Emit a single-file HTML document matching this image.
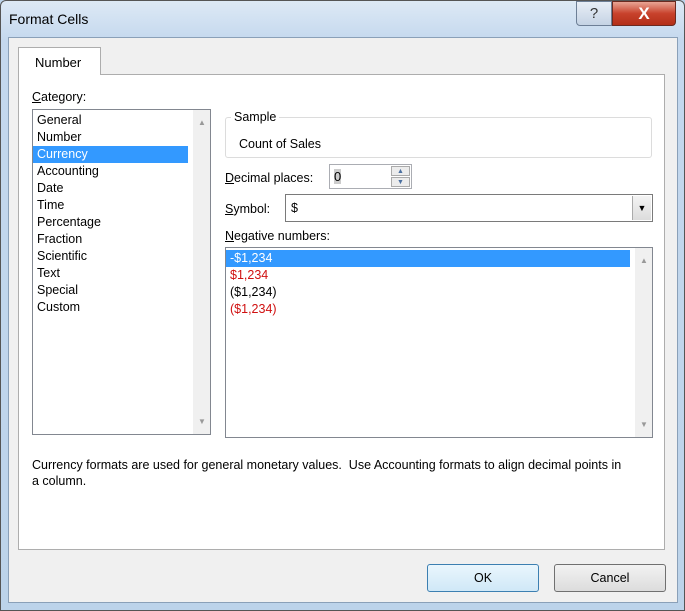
<!DOCTYPE html>
<html><head><style>
*{margin:0;padding:0;box-sizing:border-box}
body{width:685px;height:611px;overflow:hidden;font-family:"Liberation Sans",sans-serif;font-size:12px;color:#000;position:relative;background:#bcd3ea}
.a{position:absolute}
.frame{left:0;top:0;width:685px;height:611px;background:linear-gradient(#dde9f5,#c4d8ee 40px,#bcd3ea);border:1px solid #555;border-radius:6px 6px 0 0}
.client{left:8px;top:37px;width:670px;height:566px;background:#f0f0f0;border:1px solid #8aa0b8}
.panel{left:18px;top:74px;width:647px;height:476px;background:#fff;border:1px solid #adadad}
.tab{left:18px;top:47px;width:83px;height:28px;background:#fff;border:1px solid #adadad;border-bottom:none;padding:7px 0 0 16px;font-size:13px}
.list{background:#fff;border:1px solid #828790}
.it{height:17px;line-height:17px;padding-left:4px;font-size:12.5px}
.sb{position:absolute;right:0;top:0;bottom:0;width:17px;background:#f0f0f0}
.btn{border:1px solid #707070;border-radius:3px;background:linear-gradient(#f2f2f2,#dcdcdc);text-align:center;line-height:26px;font-size:12.5px}
u{text-decoration:underline}
.red{color:#d01010}
</style></head><body>
<div class="a frame"></div>
<div class="a" style="left:9px;top:11px;font-size:14px">Format Cells</div>
<div class="a" style="left:576px;top:1px;width:36px;height:25px;border:1px solid #6d7f96;border-radius:0 0 0 4px;background:linear-gradient(#e8eef6,#c5d3e4);text-align:center;font-size:15px;line-height:23px;color:#333">?</div>
<div class="a" style="left:612px;top:1px;width:64px;height:25px;border:1px solid #6b2a20;border-radius:0 0 4px 0;background:linear-gradient(#e8a595,#c8422c 50%,#b32f18);text-align:center;color:#fff;font-size:17px;font-weight:bold;line-height:23px">X</div>
<div class="a client"></div>
<div class="a panel"></div>
<div class="a tab">Number</div>
<div class="a" style="left:32px;top:90px;font-size:12.5px"><u>C</u>ategory:</div>
<div class="a list" style="left:32px;top:109px;width:179px;height:326px">
<div style="padding-top:2px">
<div class="it">General</div><div class="it">Number</div><div class="it" style="background:#3399ff;color:#fff;margin-right:22px">Currency</div><div class="it">Accounting</div><div class="it">Date</div><div class="it">Time</div><div class="it">Percentage</div><div class="it">Fraction</div><div class="it">Scientific</div><div class="it">Text</div><div class="it">Special</div><div class="it">Custom</div></div>
<div class="sb"><div class="a" style="left:5px;top:8px;color:#999;font-size:8px">▲</div><div class="a" style="left:5px;bottom:8px;color:#999;font-size:8px">▼</div></div>
</div>
<div class="a" style="left:225px;top:117px;width:427px;height:41px;border:1px solid #dcdcdc;border-radius:3px"></div>
<div class="a" style="left:231px;top:110px;background:#fff;padding:0 3px;font-size:12.5px">Sample</div>
<div class="a" style="left:239px;top:137px;font-size:12.5px">Count of Sales</div>
<div class="a" style="left:225px;top:171px;font-size:12.5px"><u>D</u>ecimal places:</div>
<div class="a" style="left:329px;top:164px;width:83px;height:25px;border:1px solid #abadb3;background:#fff"><span style="position:absolute;left:4px;top:4px;font-size:13px;background:#ccc">0</span><div class="a" style="left:61px;top:1px;width:19px;height:10px;border:1px solid #aaa;background:#ececec;font-size:7px;text-align:center;line-height:9px;color:#4a6fa0">▲</div><div class="a" style="left:61px;top:12px;width:19px;height:10px;border:1px solid #aaa;background:#ececec;font-size:7px;text-align:center;line-height:9px;color:#4a6fa0">▼</div></div>
<div class="a" style="left:225px;top:202px;font-size:12.5px"><u>S</u>ymbol:</div>
<div class="a" style="left:285px;top:194px;width:368px;height:28px;border:1px solid #7a7a7a;background:#fff"><span style="position:absolute;left:5px;top:6px;font-size:12.5px">$</span><div class="a" style="right:1px;top:1px;width:19px;height:24px;background:linear-gradient(#f4f4f4,#dcdcdc);border-left:1px solid #aaa;font-size:9px;text-align:center;line-height:24px">▼</div></div>
<div class="a" style="left:225px;top:229px;font-size:12.5px"><u>N</u>egative numbers:</div>
<div class="a list" style="left:225px;top:247px;width:428px;height:191px">
<div style="padding-top:2px">
<div class="it" style="background:#3399ff;color:#fff;margin-right:22px">-$1,234</div><div class="it red">$1,234</div><div class="it">($1,234)</div><div class="it red">($1,234)</div></div>
<div class="sb"><div class="a" style="left:5px;top:8px;color:#999;font-size:8px">▲</div><div class="a" style="left:5px;bottom:8px;color:#999;font-size:8px">▼</div></div>
</div>
<div class="a" style="left:32px;top:457px;width:595px;font-size:12.5px;line-height:16px">Currency formats are used for general monetary values.&nbsp; Use Accounting formats to align decimal points in a column.</div>
<div class="a btn" style="left:427px;top:564px;width:112px;height:28px;border-color:#3c7fb1;background:linear-gradient(#eaf6fd,#d0e8f7)">OK</div>
<div class="a btn" style="left:554px;top:564px;width:112px;height:28px">Cancel</div>
</body></html>
